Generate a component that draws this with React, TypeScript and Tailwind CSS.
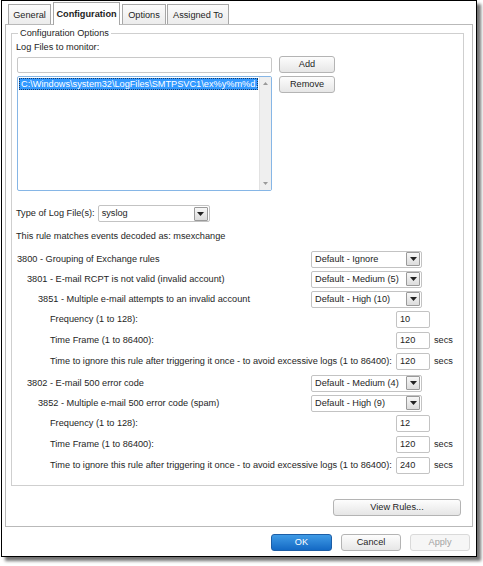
import type { ReactNode } from 'react';

const font = "font-['Liberation_Sans',Arial,sans-serif]";

function Tab({ label, active, className }: { label: string; active?: boolean; className: string }) {
    if (active) {
        return (
            <div className={`relative z-10 -mb-px flex h-[23px] items-start justify-center border border-b-0 border-[#a7a7a7] bg-white pt-[5px] font-bold ${className}`}>
                {label}
            </div>
        );
    }
    return (
        <div className={`flex h-[20px] items-start justify-center border border-b-0 border-[#a7a7a7] bg-gradient-to-b from-[#fbfbfb] to-[#ececec] pt-[4px] ${className}`}>
            {label}
        </div>
    );
}

function Button({ children, className = '' }: { children: ReactNode; className?: string }) {
    return (
        <div className={`flex items-center justify-center rounded-[3px] border border-[#b4b4b4] bg-gradient-to-b from-[#fdfdfd] to-[#e6e6e6] text-[#1e1e1e] ${className}`}>
            {children}
        </div>
    );
}

function DropDown({ value, className = '' }: { value: string; className?: string }) {
    return (
        <div className={`flex h-[17px] items-center justify-between rounded-[2px] border border-[#c3c3c3] bg-white pl-[3px] pr-px ${className}`}>
            <span className="whitespace-nowrap">{value}</span>
            <span className="flex h-[14px] w-[14px] items-center justify-center rounded-[1px] border border-[#9a9a9a] bg-gradient-to-b from-[#f7f7f7] to-[#dcdcdc]">
                <svg width="7" height="4" viewBox="0 0 7 4">
                    <path d="M0 0h7L3.5 4z" fill="#222" />
                </svg>
            </span>
        </div>
    );
}

function Field({ value }: { value: string }) {
    return (
        <div className="flex h-[17px] w-[34px] items-center rounded-[2px] border border-[#c3c3c3] bg-white pl-[3px]">
            {value}
        </div>
    );
}

type Rule =
    | { kind: 'select'; indent: string; label: string; value: string }
    | { kind: 'input'; label: string; value: string; secs?: boolean };

const rules: Rule[] = [
    { kind: 'select', indent: 'pl-[1px]', label: '3800 - Grouping of Exchange rules', value: 'Default - Ignore' },
    { kind: 'select', indent: 'pl-[11px]', label: '3801 - E-mail RCPT is not valid (invalid account)', value: 'Default - Medium (5)' },
    { kind: 'select', indent: 'pl-[22px]', label: '3851 - Multiple e-mail attempts to an invalid account', value: 'Default - High (10)' },
    { kind: 'input', label: 'Frequency (1 to 128):', value: '10' },
    { kind: 'input', label: 'Time Frame (1 to 86400):', value: '120', secs: true },
    { kind: 'input', label: 'Time to ignore this rule after triggering it once - to avoid excessive logs (1 to 86400):', value: '120', secs: true },
    { kind: 'select', indent: 'pl-[11px] mt-[1px]', label: '3802 - E-mail 500 error code', value: 'Default - Medium (4)' },
    { kind: 'select', indent: 'pl-[22px]', label: '3852 - Multiple e-mail 500 error code (spam)', value: 'Default - High (9)' },
    { kind: 'input', label: 'Frequency (1 to 128):', value: '12' },
    { kind: 'input', label: 'Time Frame (1 to 86400):', value: '120', secs: true },
    { kind: 'input', label: 'Time to ignore this rule after triggering it once - to avoid excessive logs (1 to 86400):', value: '240', secs: true },
];

function RuleRow({ rule }: { rule: Rule }) {
    if (rule.kind === 'select') {
        return (
            <div className={`flex h-[20px] items-center ${rule.indent}`}>
                <span className="min-w-0 flex-1 whitespace-nowrap">{rule.label}</span>
                <DropDown value={rule.value} className="mr-[41px] w-[111px] shrink-0" />
            </div>
        );
    }
    return (
        <div className="flex h-[21px] items-center pl-[34px]">
            <span className="min-w-0 flex-1 whitespace-nowrap">{rule.label}</span>
            <div className="flex w-[67px] shrink-0 items-center">
                <Field value={rule.value} />
                {rule.secs && <span className="ml-[4px]">secs</span>}
            </div>
        </div>
    );
}

export default function App() {
    return (
        <div className={`h-[566px] w-[483px] bg-white pl-px text-[9.2px] leading-[13px] text-[#1e1e1e] ${font}`}>
            <div className="flex h-[557px] w-[476px] flex-col border border-black bg-white shadow-[4px_4px_3px_rgba(0,0,0,0.55)]">
                {/* tab strip */}
                <div className="flex h-[23px] items-end pl-[6px]">
                    <Tab label="General" className="w-[43px]" />
                    <Tab label="Configuration" active className="ml-[2px] w-[67px]" />
                    <Tab label="Options" className="ml-[2px] w-[44px]" />
                    <Tab label="Assigned To" className="ml-px w-[62px]" />
                </div>

                {/* tab page */}
                <div className="mx-[3px] flex h-[503px] flex-col border border-[#b9b9b9] bg-white pl-[5px] pr-[8px]">
                    <fieldset className="mt-[2px] h-[459px] min-w-0 border border-[#cfcfcf] pl-[4px] shadow-[inset_1px_1px_0_#fff]">
                        <legend className="ml-[2px] px-[2px] leading-[13px]">Configuration Options</legend>

                        <div className="mt-[1px] h-[13px]">Log Files to monitor:</div>

                        <div className="flex">
                            <div className="ml-px flex w-[255px] flex-col">
                                <div className="mt-[3px] h-[16px] rounded-[2px] border border-[#c8c8c8] bg-white" />
                                <div className="mt-[3px] flex h-[115px] rounded-[2px] border border-[#86b6e6] bg-white">
                                    <div className="min-w-0 flex-1 overflow-hidden p-px">
                                        <div className="h-[12px] overflow-hidden whitespace-nowrap border border-dotted border-[#1a3c66] bg-[#3399ff] pl-px leading-[10px] text-white">
                                            C:\Windows\system32\LogFiles\SMTPSVC1\ex%y%m%d.log
                                        </div>
                                    </div>
                                    <div className="flex w-[12px] flex-col items-center justify-between border-l border-[#e2e2e2] bg-[#efefef] py-[5px]">
                                        <svg width="5" height="3" viewBox="0 0 5 3">
                                            <path d="M2.5 0L5 3H0z" fill="#9a9a9a" />
                                        </svg>
                                        <svg width="5" height="3" viewBox="0 0 5 3">
                                            <path d="M0 0h5L2.5 3z" fill="#9a9a9a" />
                                        </svg>
                                    </div>
                                </div>
                            </div>
                            <div className="ml-[7px] flex w-[56px] flex-col">
                                <Button className="mt-[2px] h-[17px]">Add</Button>
                                <Button className="mt-[3px] h-[17px]">Remove</Button>
                            </div>
                        </div>

                        <div className="mt-[14px] flex h-[17px] items-center">
                            <span>Type of Log File(s):</span>
                            <DropDown value="syslog" className="ml-[3px] w-[112px]" />
                        </div>

                        <div className="mt-[8px] h-[13px]">This rule matches events decoded as: msexchange</div>

                        <div className="mt-[6px] flex flex-col">
                            {rules.map((r, i) => (
                                <RuleRow key={i} rule={r} />
                            ))}
                        </div>
                    </fieldset>

                    <div className="mt-[13px] flex justify-end">
                        <Button className="mr-[3px] h-[17px] w-[128px]">View Rules...</Button>
                    </div>
                </div>

                {/* dialog buttons */}
                <div className="mt-[7px] flex justify-end gap-[9px] pr-[6px]">
                    <div className="flex h-[17px] w-[61px] items-center justify-center rounded-[3px] border border-[#1d5ea6] bg-gradient-to-b from-[#3f9be6] to-[#1369c4] text-white">
                        OK
                    </div>
                    <Button className="h-[17px] w-[60px]">Cancel</Button>
                    <div className="flex h-[17px] w-[60px] items-center justify-center rounded-[3px] border border-[#dadada] bg-[#f6f6f6] text-[#a3a3a3]">
                        Apply
                    </div>
                </div>
            </div>
        </div>
    );
}
